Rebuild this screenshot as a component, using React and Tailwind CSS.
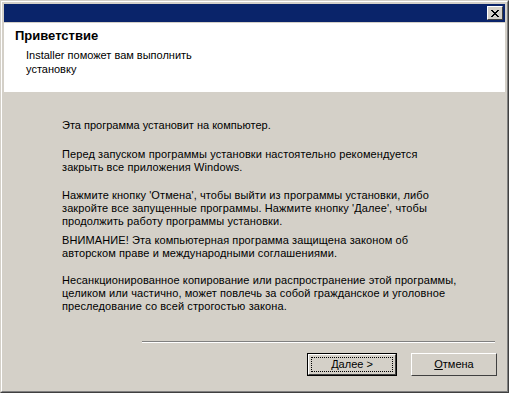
import React from 'react';

const font = { fontFamily: '"Liberation Sans", Arial, sans-serif' };

const CloseButton = () => (
  <div className="w-[16px] h-[14px] bg-[#d4d0c8] border border-t-white border-l-white border-r-[#404040] border-b-[#404040] flex items-center justify-center">
    <svg width="8" height="7" viewBox="0 0 8 7" shapeRendering="crispEdges">
      <path d="M0 0h2v1H0zM6 0h2v1H6zM1 1h2v1H1zM5 1h2v1H5zM2 2h4v1H2zM3 3h2v1H3zM2 4h4v1H2zM1 5h2v1H1zM5 5h2v1H5zM0 6h2v1H0zM6 6h2v1H6z" fill="#000" />
    </svg>
  </div>
);

const Paragraph = ({ className = '', children }) => (
  <p className={`text-[11px] leading-[13px] text-black ${className}`}>{children}</p>
);

const WizardButton = ({ primary, children }) => (
  <div className={primary ? 'border border-black' : ''}>
    <div
      className={`flex items-center justify-center bg-[#d4d0c8] border border-t-white border-l-white border-r-[#404040] border-b-[#404040] ${primary ? 'w-[88px] h-[21px]' : 'w-[86px] h-[23px]'}`}
    >
      <div className={`flex items-center justify-center ${primary ? 'w-[82px] h-[15px] border border-dotted border-black' : ''}`}>
        <span className="text-[11px] leading-[13px] text-black">{children}</span>
      </div>
    </div>
  </div>
);

export default function App() {
  return (
    <div className="w-[511px] h-[396px] bg-white" style={font}>
      <div className="w-[509px] h-[393px] flex flex-col border border-t-[#d4d0c8] border-l-[#d4d0c8] border-r-[#404040] border-b-[#404040]">
        <div className="flex-1 flex flex-col border border-t-white border-l-white border-r-[#808080] border-b-[#808080] bg-[#d4d0c8] p-[2px]">
          {/* title bar */}
          <div className="h-[18px] bg-[#0a246a] flex items-center justify-end pr-[2px]">
            <CloseButton />
          </div>

          {/* header */}
          <div className="mt-[1px] h-[69px] bg-white pl-[11px] pt-[5px]">
            <h1 className="text-[13px] leading-[16px] font-bold text-black">Приветствие</h1>
            <div className="pl-[11px] mt-[4px]">
              <Paragraph className="leading-[14px]">Installer поможет вам выполнить</Paragraph>
              <Paragraph className="leading-[14px]">установку</Paragraph>
            </div>
          </div>

          {/* body */}
          <div className="flex-1 flex flex-col pl-[58px] pt-[27px]">
            <Paragraph>Эта программа установит на компьютер.</Paragraph>
            <Paragraph className="mt-[16px] tracking-[0.1px]">
              Перед запуском программы установки настоятельно рекомендуется
              <br />
              закрыть все приложения Windows.
            </Paragraph>
            <Paragraph className="mt-[15px] tracking-[0.1px]">
              Нажмите кнопку 'Отмена', чтобы выйти из программы установки, либо
              <br />
              закройте все запущенные программы. Нажмите кнопку 'Далее', чтобы
              <br />
              продолжить работу программы установки.
            </Paragraph>
            <Paragraph className="mt-[6px] tracking-[0.1px]">
              ВНИМАНИЕ! Эта компьютерная программа защищена законом об
              <br />
              авторском праве и международными соглашениями.
            </Paragraph>
            <Paragraph className="mt-[14px] tracking-[0.1px]">
              Несанкционированное копирование или распространение этой программы,
              <br />
              целиком или частично, может повлечь за собой гражданское и уголовное
              <br />
              преследование со всей строгостью закона.
            </Paragraph>
          </div>

          {/* separator + buttons */}
          <div className="flex justify-end pr-[10px]">
            <div className="w-[353px] border-t border-t-[#808080] border-b border-b-white" />
          </div>
          <div className="flex justify-end gap-[14px] pr-[8px] pt-[10px] pb-[13px]">
            <WizardButton primary>
              <span className="underline">Д</span>алее &gt;
            </WizardButton>
            <WizardButton>
              <span className="underline">О</span>тмена
            </WizardButton>
          </div>
        </div>
      </div>
    </div>
  );
}
